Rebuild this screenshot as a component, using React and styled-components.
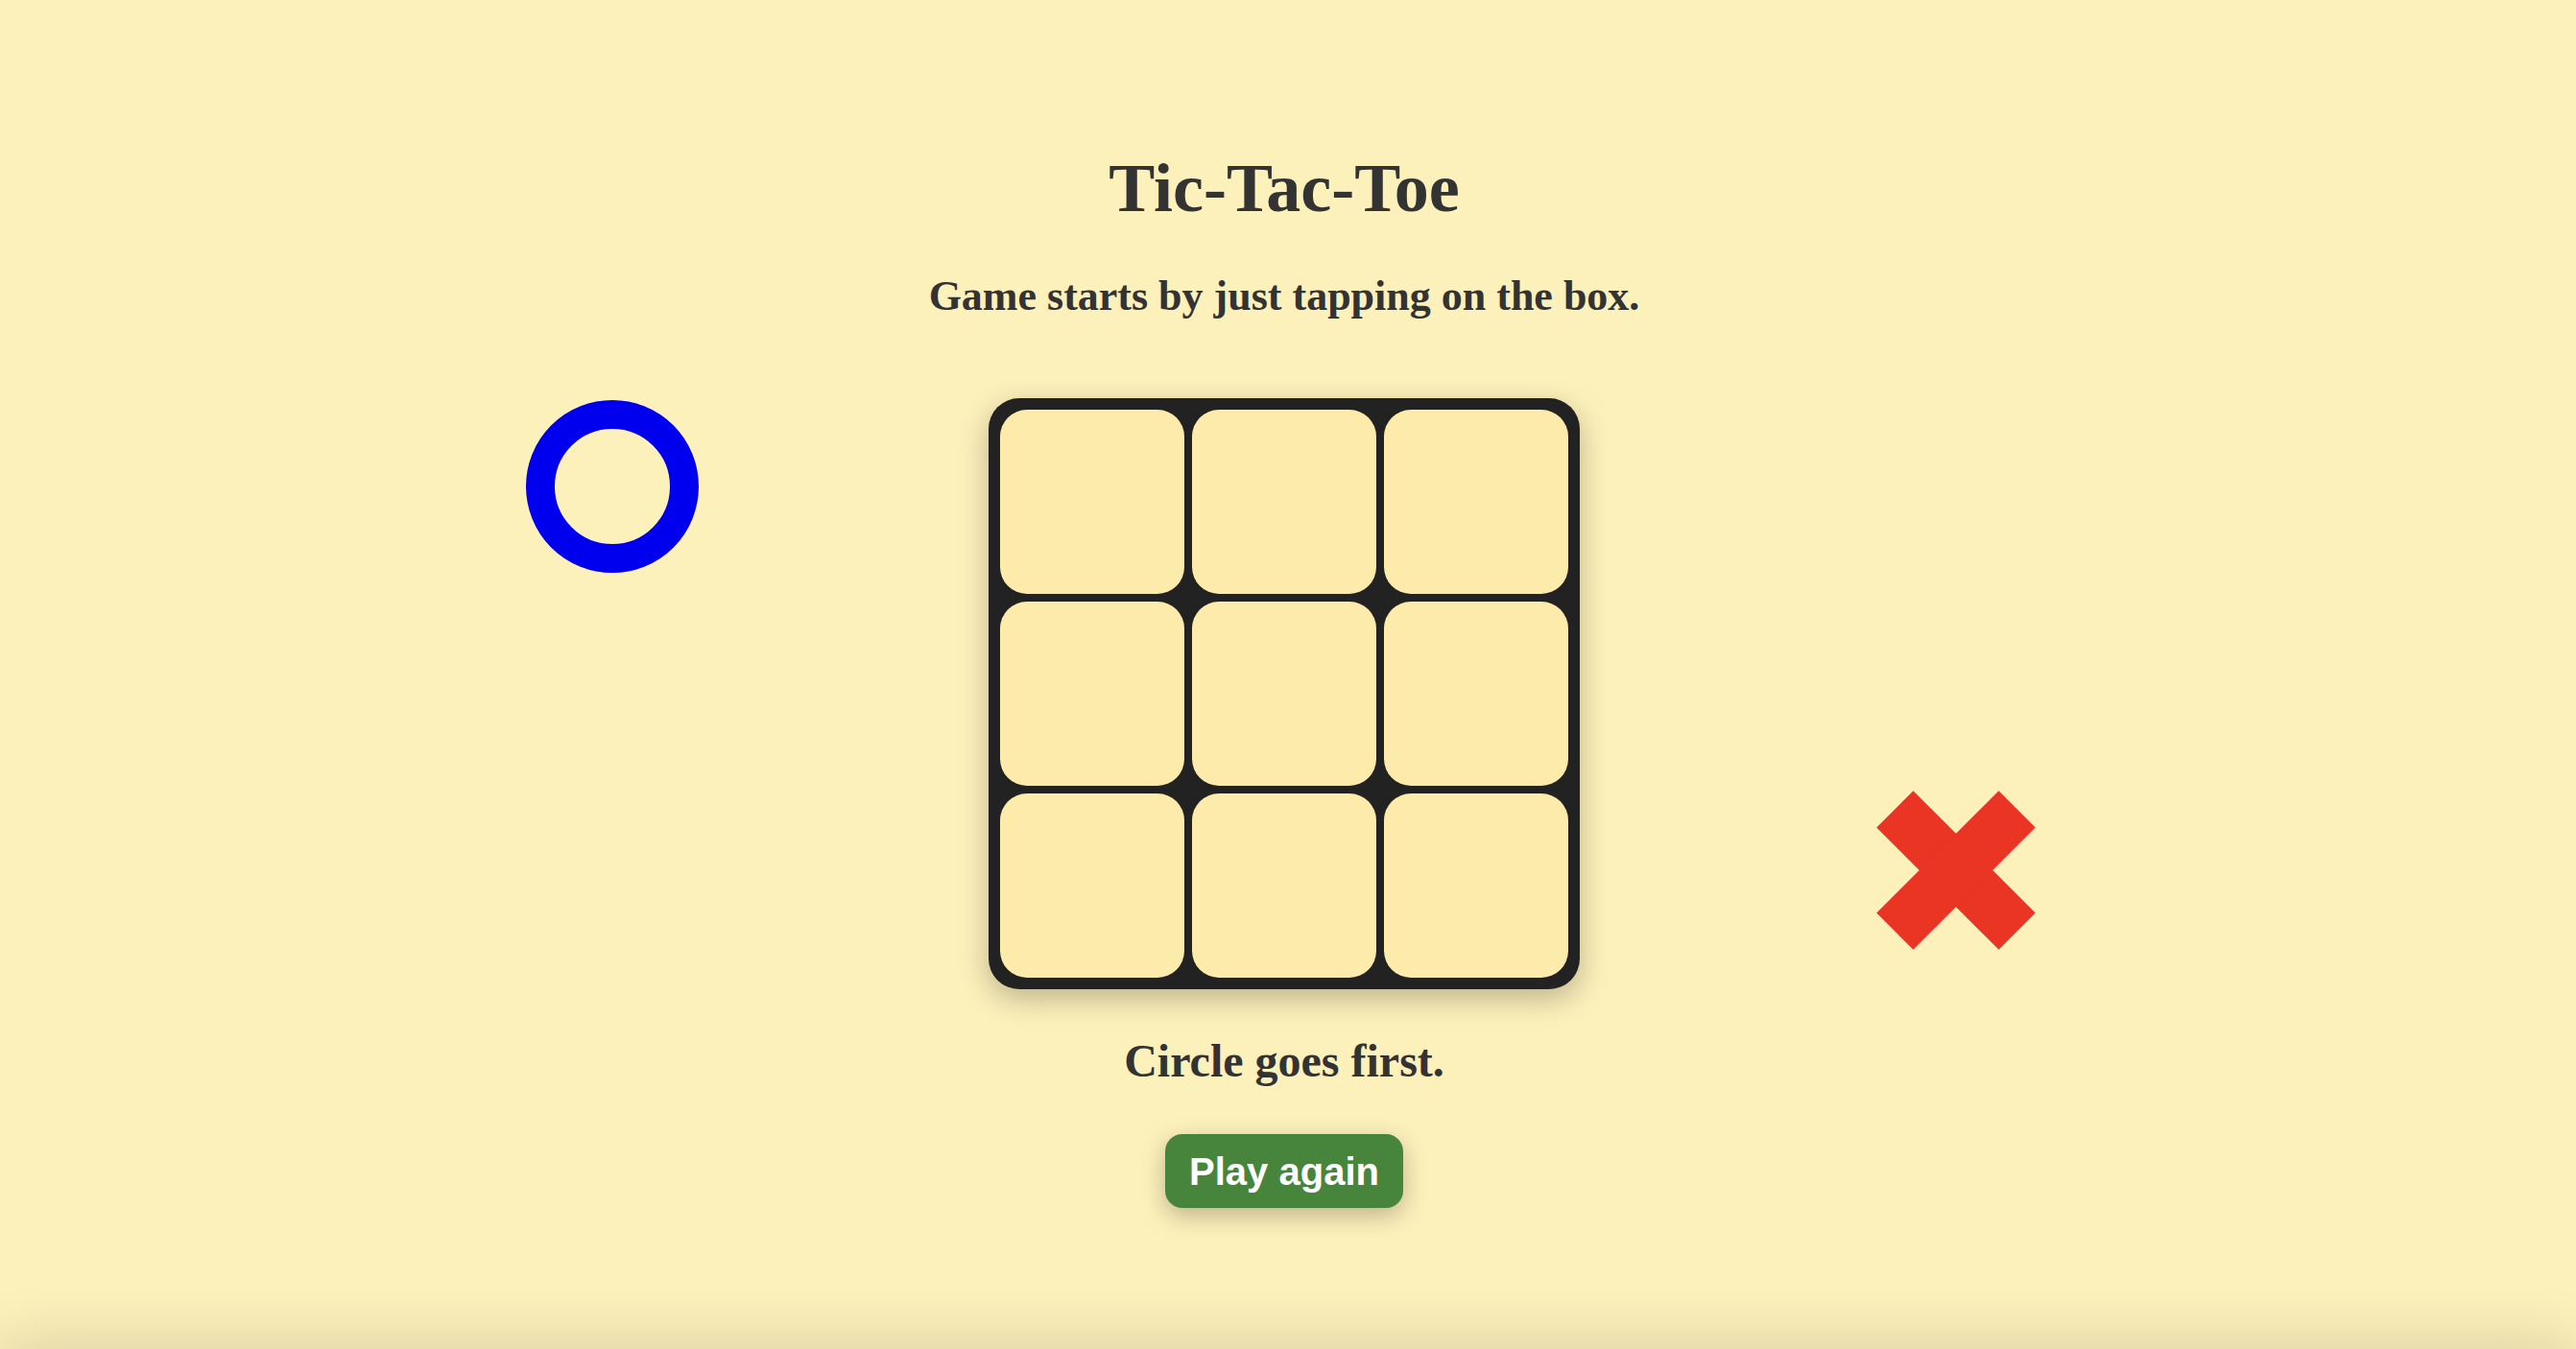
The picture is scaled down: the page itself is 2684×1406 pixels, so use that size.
import React from "react";
import styled, { createGlobalStyle } from "styled-components";

const GlobalStyle = createGlobalStyle`
  html, body {
    margin: 0;
    padding: 0;
  }
  body {
    background: #fcf0bb;
    font-family: "Liberation Serif", "Times New Roman", serif;
    color: #333;
    overflow: hidden;
  }
`;

const Page = styled.main`
  min-height: 100vh;
  display: flex;
  flex-direction: column;
  align-items: center;
  padding: 153px 8px 0 0;
  box-sizing: border-box;
`;

const Title = styled.h1`
  margin: 0;
  font-size: 72px;
  line-height: 86px;
  font-weight: 700;
`;

const Subtitle = styled.h2`
  margin: 43px 0 0;
  font-size: 44px;
  line-height: 53px;
  font-weight: 700;
`;

const Stage = styled.section`
  display: flex;
  gap: 302px;
  margin-top: 80px;
`;

const Circle = styled.div`
  width: 180px;
  height: 180px;
  box-sizing: border-box;
  border: 30px solid #0000ee;
  border-radius: 50%;
  align-self: flex-start;
  margin-top: 2px;
`;

const Cross = styled.svg`
  width: 180px;
  height: 180px;
  align-self: flex-end;
  margin-bottom: 34px;
`;

const Board = styled.div`
  display: grid;
  grid-template-columns: repeat(3, 192px);
  grid-template-rows: repeat(3, 192px);
  gap: 8px;
  padding: 12px;
  background: #222;
  border-radius: 32px;
  box-shadow: 0 10px 30px rgba(0, 0, 0, 0.25);
`;

const Cell = styled.button`
  border: none;
  padding: 0;
  border-radius: 28px;
  background: #fcebaa;
  cursor: pointer;
`;

const Status = styled.p`
  margin: 47px 0 0;
  font-size: 48px;
  line-height: 56px;
  font-weight: 700;
`;

const PlayButton = styled.button`
  margin-top: 48px;
  padding: 15.5px 25px;
  border: none;
  border-radius: 18px;
  background: #47853d;
  color: #fff;
  font-family: "Liberation Sans", Arial, sans-serif;
  font-size: 40px;
  line-height: 46px;
  font-weight: 700;
  box-shadow: 0 8px 24px rgba(0, 0, 0, 0.25);
  cursor: pointer;
`;

const Footer = styled.footer`
  height: 200px;
  background: #fcf0bb;
  box-shadow: 0 0 70px rgba(0, 0, 0, 0.16);
`;

const cells = Array.from({ length: 9 }, (_, i) => i);

const App = () => {
  return (
    <>
      <GlobalStyle />
      <Page>
        <Title>Tic-Tac-Toe</Title>
        <Subtitle>Game starts by just tapping on the box.</Subtitle>
        <Stage>
          <Circle />
          <Board>
            {cells.map((i) => (
              <Cell key={i} aria-label={`box ${i + 1}`} />
            ))}
          </Board>
          <Cross viewBox="0 0 180 180">
            <rect x="0" y="63" width="180" height="54" fill="#ea3424" transform="rotate(45 90 90)" />
            <rect x="0" y="63" width="180" height="54" fill="#ea3424" transform="rotate(-45 90 90)" />
          </Cross>
        </Stage>
        <Status>Circle goes first.</Status>
        <PlayButton>Play again</PlayButton>
      </Page>
      <Footer />
    </>
  );
};

export default App;
